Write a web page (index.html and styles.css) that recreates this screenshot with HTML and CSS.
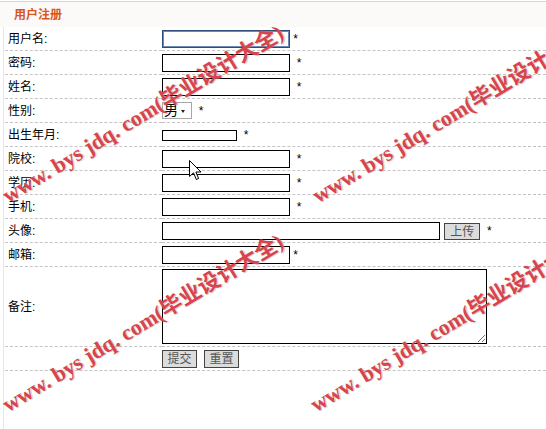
FILE: index.html
```html
<!DOCTYPE html>
<html lang="zh-CN">
<head>
    <meta charset="UTF-8">
    <title>用户注册</title>
    <link rel="stylesheet" href="styles.css">
</head>
<body>
    <div class="title-bar">用户注册</div>
    <div class="wrap">
        <table class="reg-table">
            <tr>
                <td class="label">用户名:</td>
                <td><span class="txt focus"></span> *</td>
            </tr>
            <tr>
                <td class="label">密码:</td>
                <td><span class="txt"></span> &nbsp;*</td>
            </tr>
            <tr>
                <td class="label">姓名:</td>
                <td><span class="txt"></span> &nbsp;*</td>
            </tr>
            <tr>
                <td class="label">性别:</td>
                <td><span class="sel">男<i class="arrow"></i></span> &nbsp;*</td>
            </tr>
            <tr>
                <td class="label">出生年月:</td>
                <td><span class="txt date"></span> &nbsp;*</td>
            </tr>
            <tr>
                <td class="label">院校:</td>
                <td><span class="txt"></span> &nbsp;*</td>
            </tr>
            <tr>
                <td class="label">学历:</td>
                <td><span class="txt"></span> &nbsp;*</td>
            </tr>
            <tr>
                <td class="label">手机:</td>
                <td><span class="txt"></span> &nbsp;*</td>
            </tr>
            <tr>
                <td class="label">头像:</td>
                <td><span class="txt wide"></span> <span class="btn upload">上传</span> &nbsp;*</td>
            </tr>
            <tr>
                <td class="label">邮箱:</td>
                <td><span class="txt"></span> *</td>
            </tr>
            <tr class="memo-row">
                <td class="label">备注:</td>
                <td><span class="memo"><i class="grip"></i></span></td>
            </tr>
            <tr>
                <td class="label"></td>
                <td><span class="btn">提交</span><span class="btn gap">重置</span></td>
            </tr>
        </table>
    </div>

    <div class="mark m1">www. bys jdq. com(毕业设计大全)</div>
    <div class="mark m2">www. bys jdq. com(毕业设计大全)</div>
    <div class="mark m3">www. bys jdq. com(毕业设计大全)</div>
    <div class="mark m4">www. bys jdq. com(毕业设计大全)</div>

    <svg class="cursor" width="13" height="21" viewBox="0 0 13 21">
        <path d="M0.5 0.5 L0.5 16.5 L4.5 12.8 L7.3 19.5 L9.6 18.5 L6.9 12 L12 12 Z" fill="#fff" stroke="#000" stroke-width="1"/>
    </svg>
</body>
</html>
```

FILE: styles.css
```css
* { box-sizing: border-box; }
body {
    margin: 0;
    padding-top: 1px;
    font-family: "Liberation Sans", "Noto Sans CJK SC", sans-serif;
    font-size: 12px;
    color: #000;
    background: #fff;
    overflow: hidden;
}
.title-bar {
    border-top: 1px solid #f0c4ee;
    height: 26px;
    padding: 5px 0 0 14px;
    background: #fcf9f9;
    color: #d8561a;
    font-weight: bold;
    font-size: 12px;
    line-height: 16px;
}
.wrap {
    margin-left: 3px;
    border-left: 1px solid #e6e6e6;
    padding-left: 1px;
    padding-bottom: 80px;
}
.reg-table {
    width: 100%;
    border-collapse: collapse;
}
.reg-table td {
    border-bottom: 1px dashed #c4c4c4;
    padding: 3px 0 2px 0;
    line-height: 18px;
    vertical-align: middle;
    white-space: nowrap;
}
.reg-table td.label {
    width: 157px;
    padding-left: 3px;
}
.txt {
    display: inline-block;
    vertical-align: top;
    width: 128px;
    height: 18px;
    border: 1px solid #000;
    background: #fff;
}
.txt.focus {
    border-color: #2e4d7b;
    box-shadow: inset 0 0 0 1px #6f8bb5;
}
.txt.date {
    width: 75px;
    height: 11px;
    margin-top: 4px;
}
.txt.wide {
    width: 278px;
}
.sel {
    display: inline-block;
    vertical-align: top;
    position: relative;
    width: 30px;
    height: 17px;
    border: 1px solid #a8a8a8;
    font-size: 14px;
    line-height: 15px;
    padding-left: 1px;
}
.arrow {
    position: absolute;
    right: 6px;
    top: 7px;
    border-left: 2px solid transparent;
    border-right: 2px solid transparent;
    border-top: 3px solid #222;
}
.btn {
    display: inline-block;
    vertical-align: top;
    width: 35px;
    height: 18px;
    border: 1px solid #444;
    background: #dcdcdc;
    color: #555;
    text-align: center;
    line-height: 16px;
}
.btn.upload {
    margin-left: 1px;
    width: 36px;
    height: 17px;
    margin-top: 1px;
}
.btn.gap {
    margin-left: 7px;
}
.memo-row td {
    padding-top: 2px;
}
.memo {
    display: block;
    position: relative;
    width: 325px;
    height: 75px;
    border: 1px solid #000;
}
.grip {
    position: absolute;
    right: 1px;
    bottom: 1px;
    width: 7px;
    height: 7px;
    background: linear-gradient(135deg, transparent 45%, #777 45%, #777 55%, transparent 55%, transparent 75%, #777 75%, #777 85%, transparent 85%);
}
.mark {
    position: absolute;
    white-space: nowrap;
    font-family: "Liberation Serif", "Noto Sans CJK SC", serif;
    font-weight: bold;
    font-size: 22px;
    line-height: 22px;
    color: #d9434d;
    text-shadow: 1px 1px 1px rgba(140, 140, 140, 0.45);
    transform: rotate(-31deg);
    transform-origin: 0 100%;
    pointer-events: none;
}
.m1 { left: 10px; top: 185px; }
.m2 { left: 320px; top: 185px; }
.m3 { left: 10px; top: 394px; }
.m4 { left: 318px; top: 394px; }
.cursor {
    position: absolute;
    left: 189px;
    top: 160px;
}
```
